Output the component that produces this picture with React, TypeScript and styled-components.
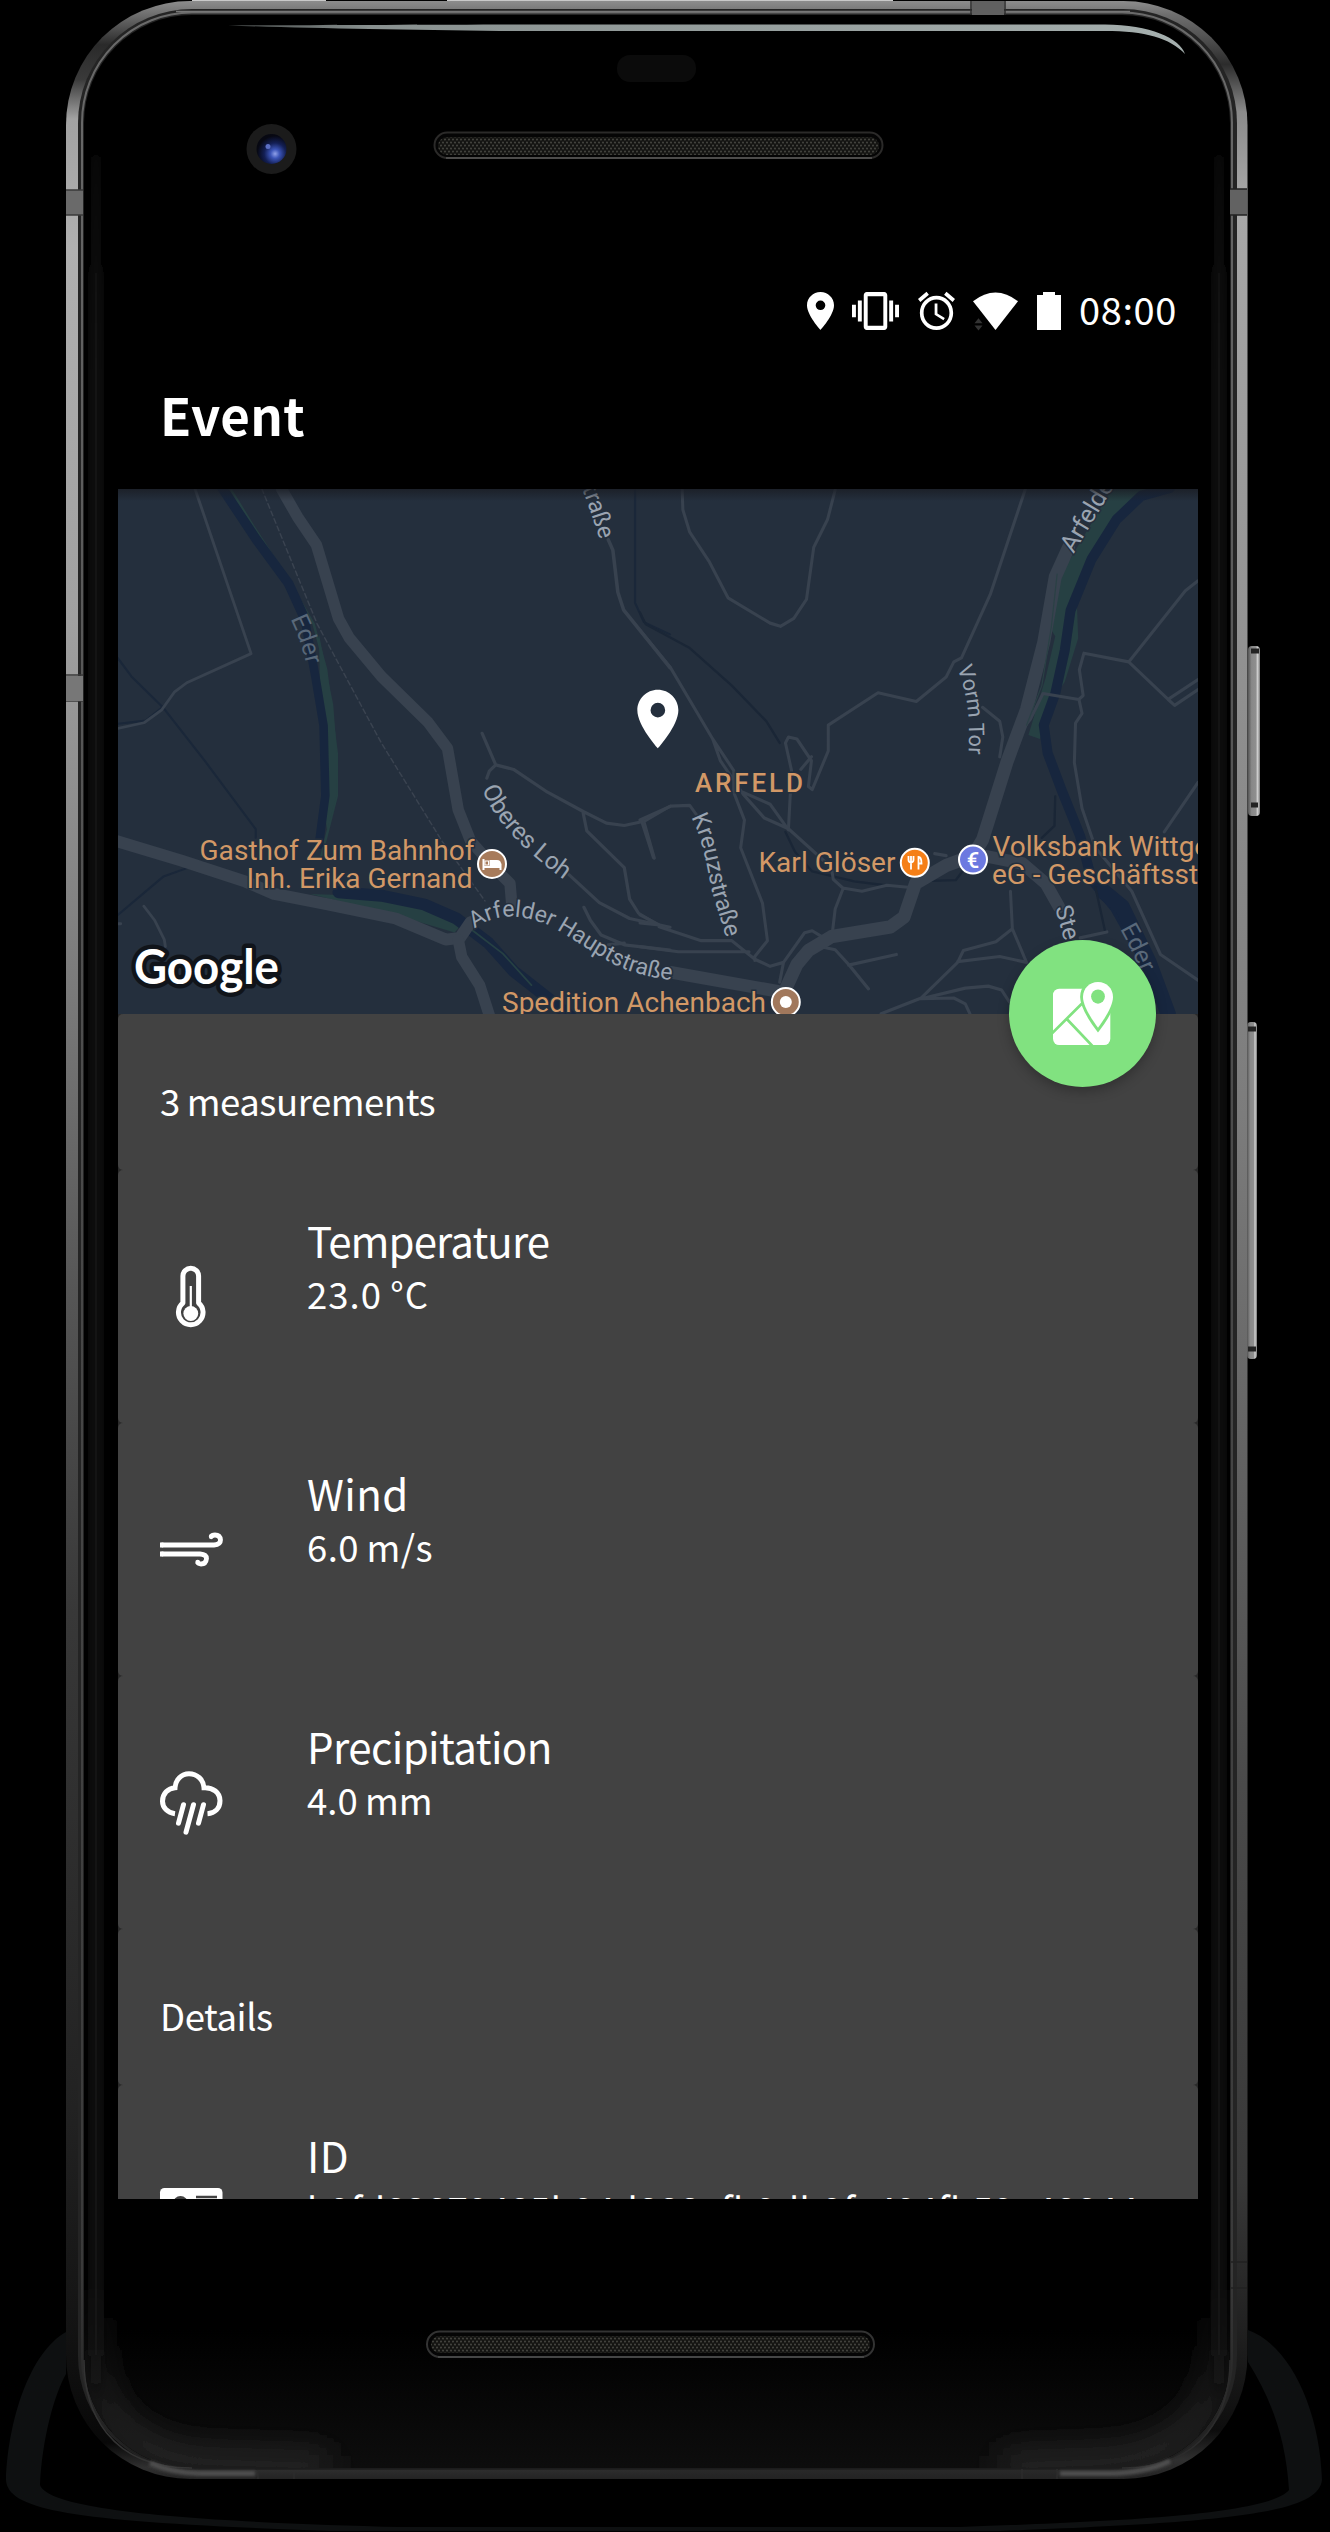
import React from "react";
import styled, { createGlobalStyle } from "styled-components";

const GlobalStyle = createGlobalStyle`
  body { margin: 0; background: #000; }
  * { box-sizing: border-box; }
`;

const sans = `"Noto Sans CJK SC", "Noto Sans", sans-serif`;

const Stage = styled.main`
  display: grid;
  width: 1330px;
  height: 2532px;
  background: #000;
  overflow: hidden;
  font-family: ${sans};
  color: #fff;
`;

const DeviceArt = styled.svg`
  grid-area: 1 / 1;
  width: 1330px;
  height: 2532px;
`;

const Screen = styled.section`
  grid-area: 1 / 1;
  display: flex;
  flex-direction: column;
  width: 1080px;
  height: 1920px;
  margin: 279px 0 0 118px;
  overflow: hidden;
`;

const StatusBar = styled.header`
  display: flex;
  flex: none;
  align-items: center;
  justify-content: flex-end;
  gap: 18.5px;
  height: 63px;
  padding-right: 21px;
`;

const StatusIcon = styled.svg<{ $w: number }>`
  display: block;
  width: ${(p) => p.$w}px;
  height: 38px;
  fill: #fff;
  overflow: visible;
`;

const Clock = styled.time`
  font-size: 38px;
  line-height: 60px;
  letter-spacing: 0.6px;
  padding-bottom: 3px;
`;

const AppBar = styled.div`
  display: flex;
  flex: none;
  align-items: center;
  height: 147px;
  padding: 0 0 3.5px 42px;
`;

const Title = styled.h1`
  margin: 0;
  font-size: 51px;
  line-height: 74px;
  font-weight: 700;
  letter-spacing: 0.3px;
`;

const MapArea = styled.div`
  position: relative;
  z-index: 1;
  flex: none;
  height: 525px;
`;

const MapDrawing = styled.svg`
  display: block;
  width: 1080px;
  height: 525px;
  font-family: Roboto, sans-serif;
`;

const Fab = styled.button`
  position: absolute;
  right: 42px;
  bottom: -73px;
  display: flex;
  align-items: center;
  justify-content: center;
  width: 147px;
  height: 147px;
  padding: 0;
  border: 0;
  border-radius: 50%;
  background: #81e280;
  box-shadow: 0 5px 12px rgba(0, 0, 0, 0.25);
`;

const List = styled.div`
  display: flex;
  flex: 1;
  flex-direction: column;
  min-height: 0;
  background: #2a2a2a;
`;

const Heading = styled.h2`
  flex: none;
  height: 156px;
  margin: 0;
  padding: 27px 42px 0;
  border-radius: 5px;
  background: #424242;
  font-size: 36.5px;
  line-height: 120px;
  font-weight: 400;
  letter-spacing: -0.45px;
`;

const Row = styled.article`
  display: flex;
  flex: none;
  height: 253px;
  padding-left: 42px;
  border-radius: 5px;
  background: #424242;
`;

const RowIcon = styled.svg`
  flex: none;
  align-self: center;
  width: 63px;
  height: 70px;
  margin-right: 84px;
  overflow: visible;
`;

const RowText = styled.div`
  display: flex;
  flex-direction: column;
  padding-top: 40.5px;
  white-space: nowrap;
`;

const Label = styled.div<{ $tracking: number }>`
  font-size: 42px;
  line-height: 58px;
  letter-spacing: ${(p) => p.$tracking}px;
`;

const Value = styled.div<{ $tracking: number }>`
  font-size: 36.5px;
  line-height: 50px;
  letter-spacing: ${(p) => p.$tracking}px;
`;

function Device() {
  return (
    <DeviceArt viewBox="0 0 1330 2532" aria-hidden="true">
      <defs>
        <linearGradient id="metalL" gradientUnits="userSpaceOnUse" x1="0" y1="0" x2="0" y2="2480">
          <stop offset="0" stopColor="#8f8f8f" />
          <stop offset=".006" stopColor="#6e6e6e" />
          <stop offset=".018" stopColor="#2a2a2a" />
          <stop offset=".032" stopColor="#3a3a3a" />
          <stop offset=".048" stopColor="#a2a2a2" />
          <stop offset=".1" stopColor="#b0b0b0" />
          <stop offset=".25" stopColor="#a0a0a0" />
          <stop offset=".4" stopColor="#7a7a7a" />
          <stop offset=".52" stopColor="#565656" />
          <stop offset=".65" stopColor="#383838" />
          <stop offset=".85" stopColor="#222" />
          <stop offset=".93" stopColor="#151515" />
          <stop offset=".985" stopColor="#080808" />
          <stop offset=".995" stopColor="#303030" />
          <stop offset="1" stopColor="#222" />
        </linearGradient>
        <linearGradient id="metalR" gradientUnits="userSpaceOnUse" x1="0" y1="0" x2="0" y2="2480">
          <stop offset="0" stopColor="#8f8f8f" />
          <stop offset=".006" stopColor="#6e6e6e" />
          <stop offset=".014" stopColor="#555" />
          <stop offset=".026" stopColor="#2c2c2c" />
          <stop offset=".045" stopColor="#8a8a8a" />
          <stop offset=".08" stopColor="#a8a8a8" />
          <stop offset=".25" stopColor="#939393" />
          <stop offset=".45" stopColor="#7c7c7c" />
          <stop offset=".6" stopColor="#606060" />
          <stop offset=".72" stopColor="#4a4a4a" />
          <stop offset=".88" stopColor="#383838" />
          <stop offset=".94" stopColor="#202020" />
          <stop offset=".98" stopColor="#0d0d0d" />
          <stop offset=".992" stopColor="#303030" />
          <stop offset="1" stopColor="#222" />
        </linearGradient>
        <linearGradient id="innerEdge" x1="0" x2="0" y1="0" y2="1">
          <stop offset="0" stopColor="#6a6a6a" />
          <stop offset=".5" stopColor="#484848" />
          <stop offset=".92" stopColor="#3a3a3a" />
          <stop offset="1" stopColor="#1c1c1c" />
        </linearGradient>
        <linearGradient id="foot" x1="0" x2="0" y1="0" y2="1">
          <stop offset="0" stopColor="#000" />
          <stop offset="1" stopColor="#0d0d0d" />
        </linearGradient>
        <linearGradient id="sideGlow" x1="0" x2="0" y1="0" y2="1">
          <stop offset="0" stopColor="#181818" stopOpacity="0" />
          <stop offset=".12" stopColor="#181818" />
          <stop offset=".97" stopColor="#181818" />
          <stop offset="1" stopColor="#181818" stopOpacity="0" />
        </linearGradient>
        <linearGradient id="cornerGlow" gradientUnits="userSpaceOnUse" x1="0" y1="2270" x2="0" y2="2440">
          <stop offset="0" stopColor="#262626" stopOpacity="0" />
          <stop offset="1" stopColor="#2a2a2a" />
        </linearGradient>
        <linearGradient id="shine" x1="0" x2="1" y1="0" y2="0">
          <stop offset="0" stopColor="#8a9291" stopOpacity=".5" />
          <stop offset=".15" stopColor="#899190" />
          <stop offset="1" stopColor="#a5afae" />
        </linearGradient>
        <linearGradient id="button" x1="0" x2="1" y1="0" y2="0">
          <stop offset="0" stopColor="#555" />
          <stop offset=".3" stopColor="#888" />
          <stop offset=".65" stopColor="#8f8f8f" />
          <stop offset=".8" stopColor="#d0d0d0" />
          <stop offset="1" stopColor="#777" />
        </linearGradient>
        <radialGradient id="lens" cx=".62" cy=".66" r=".6">
          <stop offset="0" stopColor="#8fa0e8" />
          <stop offset=".25" stopColor="#3c55b8" />
          <stop offset=".6" stopColor="#131f55" />
          <stop offset="1" stopColor="#070812" />
        </radialGradient>
        <filter id="soft" filterUnits="userSpaceOnUse" x="0" y="0" width="1330" height="2532">
          <feGaussianBlur stdDeviation="4" />
        </filter>
        <filter id="fine" filterUnits="userSpaceOnUse" x="0" y="2400" width="1330" height="132">
          <feGaussianBlur stdDeviation="1.500" />
        </filter>
        <filter id="wide" filterUnits="userSpaceOnUse" x="0" y="2000" width="1330" height="532">
          <feGaussianBlur stdDeviation="16" />
        </filter>
        <pattern id="mesh" width="4" height="6" patternUnits="userSpaceOnUse">
          <rect width="4" height="6" fill="#141412" />
          <circle cx="1" cy="1.500" r="1.100" fill="#41413c" />
          <circle cx="3" cy="4.500" r="1.100" fill="#41413c" />
        </pattern>
        <clipPath id="leftHalf"><rect x="0" y="0" width="660" height="2532" /></clipPath>
        <clipPath id="rightHalf"><rect x="660" y="0" width="670" height="2532" /></clipPath>
        <clipPath id="glass">
          <rect x="84" y="16" width="1146" height="2452" rx="108" />
        </clipPath>
      </defs>

      <path d="M66 2332 C30 2352 8 2420 6 2480 C8 2512 80 2522 330 2531 H1000 C1240 2522 1318 2512 1322 2480 C1320 2410 1290 2345 1248 2330 V2362 C1272 2400 1286 2440 1289 2490 C1268 2516 1100 2522 960 2527 H400 C250 2523 50 2515 40 2485 C42 2440 54 2395 66 2374 Z" fill="#0e1011" />

      <path d="M192 .5H326M447 .5H893" stroke="#c9c9c9" strokeWidth="1.500" />
      <rect x="66" y="1" width="1181" height="2478" rx="124" fill="url(#metalL)" clipPath="url(#leftHalf)" />
      <rect x="66" y="1" width="1181.500" height="2478" rx="124" fill="url(#metalR)" clipPath="url(#rightHalf)" />
      <rect x="78" y="9" width="1159" height="2461" rx="114" fill="#242424" />
      <rect x="82" y="12.500" width="1150" height="2456" rx="110" fill="none" stroke="url(#innerEdge)" strokeWidth="2" />
      <path d="M176 11.500H1130" stroke="#777" strokeWidth="1.500" />
      <rect x="84" y="15" width="1146" height="2453" rx="108" fill="#000" />
      <rect x="66" y="190" width="17" height="25" fill="#6a6a6a" />
      <path d="M66 190H83M66 215H83M66 675H83M66 701H83" stroke="#3a3a3a" strokeWidth="1.500" />
      <rect x="66" y="676" width="17" height="25" fill="#777" />
      <rect x="1230" y="189" width="17" height="26" fill="#626262" />
      <path d="M1230 189H1247M1230 215H1247M1231 2262H1247M1231 2288H1247" stroke="#222" strokeWidth="1.500" />
      <rect x="972" y="1" width="32" height="14" fill="#606060" />
      <path d="M971 1V15M1005 1V15M258 2470V2479M294 2470V2479M1022 2469V2479M1057 2469V2479" stroke="#2c2c2c" strokeWidth="1.500" />

      <g clipPath="url(#glass)">
        <rect x="84" y="2330" width="1146" height="138" fill="url(#foot)" />
        <path d="M94 2250 V2350 Q98 2452 200 2462 L330 2466" fill="none" stroke="url(#cornerGlow)" strokeWidth="26" filter="url(#wide)" />
        <path d="M1220 2250 V2350 Q1214 2452 1110 2462 L1000 2466" fill="none" stroke="url(#cornerGlow)" strokeWidth="26" filter="url(#wide)" />
        <rect x="91" y="90" width="10" height="2310" fill="url(#sideGlow)" filter="url(#soft)" />
        <rect x="1214" y="90" width="10" height="2310" fill="url(#sideGlow)" filter="url(#soft)" />
      </g>
      <path d="M84 2360 C84 2410 108 2468 192 2468" fill="none" stroke="#333" strokeWidth="1.500" />
      <path d="M1230 2360 C1230 2410 1206 2468 1122 2468" fill="none" stroke="#2c2c2c" strokeWidth="1.500" />
      <path d="M150 2463 Q172 2473 200 2473.500 H255M1060 2473.500 H1110 Q1145 2473 1170 2461" fill="none" stroke="#505050" strokeWidth="5" filter="url(#fine)" />

      <path d="M228 25.500 C300 25 400 25 500 24.500 H1105 C1150 25 1180 38 1185 54 C1170 38 1145 31 1105 31 H500 C400 30 300 28 228 25.500Z" fill="url(#shine)" />

      <rect x="617" y="55" width="79" height="27" rx="13" fill="#0b0b0b" />
      <circle cx="271.500" cy="149" r="25" fill="#1b1b1b" />
      <circle cx="271.500" cy="149" r="15" fill="url(#lens)" />
      <circle cx="268" cy="146.500" r="2.500" fill="#5c6fc4" />

      <rect x="434.500" y="132.500" width="448" height="25.500" rx="12.750" fill="#050505" stroke="#2b2a29" strokeWidth="2" />
      <rect x="438" y="137" width="441" height="18" rx="9" fill="url(#mesh)" />
      <path d="M446 158H872" stroke="#5a5957" strokeWidth="1.500" />
      <rect x="427" y="2331.500" width="447" height="25.500" rx="12.750" fill="#050505" stroke="#333" strokeWidth="2" />
      <rect x="431" y="2336" width="439" height="17" rx="8.500" fill="url(#mesh)" />
      <path d="M438 2357H864" stroke="#4c4e4e" strokeWidth="1.500" />

      <rect x="1248" y="646" width="12" height="170" rx="4" fill="url(#button)" />
      <path d="M1251 651H1259M1251 805H1258" stroke="#222" strokeWidth="5" />
      <rect x="1247" y="1022" width="10" height="337" rx="4" fill="url(#button)" />
      <path d="M1248 1029H1256M1248 1349H1256" stroke="#222" strokeWidth="5" />
    </DeviceArt>
  );
}

function StatusIcons() {
  return (
    <>
      <StatusIcon $w={27} viewBox="5 2 14 20" preserveAspectRatio="none">
        <path d="M12 2C8.13 2 5 5.13 5 9c0 5.25 7 13 7 13s7-7.75 7-13c0-3.87-3.13-7-7-7zm0 9.5a2.5 2.5 0 1 1 0-5 2.5 2.5 0 0 1 0 5z" />
      </StatusIcon>
      <StatusIcon $w={47} viewBox="0 3 24 18" preserveAspectRatio="none">
        <path d="M0 15h2V9H0v6zm3 2h2V7H3v10zm19-8v6h2V9h-2zm-3 8h2V7h-2v10zM16.500 3h-9C6.670 3 6 3.670 6 4.500v15c0 .83.67 1.500 1.500 1.500h9c.83 0 1.500-.67 1.500-1.500v-15c0-.83-.67-1.500-1.500-1.500zM16 19H8V5h8v14z" />
      </StatusIcon>
      <StatusIcon $w={37} viewBox="2 2 20 20" preserveAspectRatio="none">
        <path d="M22 5.720l-4.600-3.860-1.290 1.530 4.600 3.860L22 5.720zM7.880 3.390L6.600 1.860 2 5.710l1.290 1.530 4.590-3.850zM12.500 8H11v6l4.750 2.850.75-1.230-4-2.370V8zM12 4c-4.970 0-9 4.030-9 9s4.020 9 9 9a9 9 0 0 0 0-18zm0 16c-3.870 0-7-3.130-7-7s3.130-7 7-7 7 3.130 7 7-3.130 7-7 7z" />
      </StatusIcon>
      <StatusIcon $w={45} viewBox="0 0 45 37" preserveAspectRatio="none">
        <path d="M0 9Q22.500-8 45 9L22.500 37Z" />
        <path d="M1.500 30.500h8l-4-5zM1.500 32.500h8l-4 5z" fill="#333" />
      </StatusIcon>
      <StatusIcon $w={24} viewBox="0 0 24 38" preserveAspectRatio="none">
        <path d="M6 0H18V3H24V38H0V3H6Z" />
      </StatusIcon>
    </>
  );
}

const ROAD = "#38424f";
const WATER = "#17263e";
const PARK = "#264043";
const POI = "#d29866";
const STREET = "#9aa4b1";

function TownMap() {
  return (
    <MapDrawing viewBox="118 489 1080 525">
      <defs>
        <linearGradient id="mapShade" x1="0" x2="0" y1="0" y2="1">
          <stop offset="0" stopColor="#1a1d24" stopOpacity=".8" />
          <stop offset="1" stopColor="#1a1d24" stopOpacity="0" />
        </linearGradient>
        <path id="pStrTop" d="M560 440 L584 494 Q592 515 600 540" />
        <path id="pArf" d="M1073.500 554 L1113 488 L1151 425" />
        <path id="pEderL" d="M290.500 619 Q301 640 307 668" />
        <path id="pEderR" d="M1120 929 Q1132 950 1144 980" />
        <path id="pOberes" d="M482 789 C492 815 515 845 566 881" />
        <path id="pHaupt" d="M474.500 929 C497 912 520 914 548 925 C575 938 610 968 640 974 C655 978 665 980 685 981" />
        <path id="pKreuz" d="M691 817 C706 845 708 880 714 898 C719 915 724 930 730 950" />
        <path id="pVorm" d="M957 668 C967 693 971 715 968 765" />
        <path id="pSte" d="M1055 908 Q1060 925 1068 955" />
      </defs>
      <rect x="118" y="489" width="1080" height="525" fill="#242f3d" />

      <g transform="translate(110 480) scale(.35714 .3508)" fill="none" strokeLinejoin="round" strokeLinecap="round">
        <path d="M340 30 L400 130 L470 240 L530 340 L570 410 L605 540 L635 780 L635 900 L610 1000 L590 1080" stroke={PARK} strokeWidth="7" />
        <path d="M585 440 L625 640 L637 800 L634 900 L608 1000 L595 900 L590 700 Z" fill={PARK} />
        <path d="M560 1180 L850 1190 L960 1230 L990 1260 L965 1290 L800 1240 Z" fill={PARK} />
        <path d="M312 20 L410 170 L500 295 L545 395" stroke={WATER} strokeWidth="27" />
        <path d="M545 395 L575 560 L598 700 L603 900 L590 1000 L585 1040" stroke={WATER} strokeWidth="24" />
        <path d="M640 1175 L760 1185 L880 1210 L970 1250 L1060 1320 L1130 1400 L1230 1480 L1290 1530" stroke={WATER} strokeWidth="34" />
        <path d="M1010 1280 L1100 1350 L1180 1440" stroke={PARK} strokeWidth="5" />
        <path d="M22 508 L60 560 L150 650 L265 800 L408 995 V1020 M22 695 L100 686 L150 645 M22 1240 L150 1130 L260 1090 M1470 30 V350 L1495 405 L1568 440" stroke="#1a2739" strokeWidth="6" />
        <path d="M238 25 L395 495 L215 578 L180 605 L145 655 L95 692 L22 708" stroke={ROAD} strokeWidth="8" />
        <path d="M22 1265H30M95 1215 L125 1255 L152 1310 L155 1330" stroke={ROAD} strokeWidth="8" />
        <path d="M425 25 L580 410 L760 750 L930 1030 L1050 1200" stroke="#3a4350" strokeWidth="4" strokeDasharray="14 9" />
        <path d="M480 25 L525 105 L578 185 L640 395 L670 450 L760 560 L890 690 L945 765 L975 940 L1010 1030 L1090 1120 L1120 1150 L1125 1210" stroke={ROAD} strokeWidth="32" />
        <path d="M15 1028 L200 1085 L380 1145 L460 1180 L610 1210 L800 1250 L940 1310 L980 1305 L1010 1260" stroke={ROAD} strokeWidth="34" />
        <path d="M975 1310 L985 1360 L1035 1440 L1065 1535" stroke={ROAD} strokeWidth="32" />
        <path d="M1395 170 L1408 200 L1422 320 L1438 370 L1568 535" stroke={ROAD} strokeWidth="10" />
        <path d="M1042 722 L1080 812 L1062 830 L1055 850 M1080 812 L1130 825 L1225 890 L1325 945 L1390 978 L1440 985 L1495 973 L1568 930 M1325 950 L1335 1000 L1440 1105 L1455 1195 L1480 1235 L1530 1265 M1495 975 L1524 1078 M1285 1125 L1370 1205 L1455 1250 L1568 1275 M1327 1218 L1345 1255 L1375 1297 L1440 1325 L1568 1340 M1395 1325 L1440 1320" stroke={ROAD} strokeWidth="9" />
      </g>

      <g transform="translate(640 480) scale(.3827 .3954)" fill="none" strokeLinejoin="round" strokeLinecap="round">
        <path d="M1235 20 H1345 L1250 80 L1180 180 L1140 270 L1145 400 L1110 510 L1070 570 L1045 655 L1015 645 L1060 500 L1085 395 L1072 375 L1095 250 L1130 190 Z" fill={PARK} />
        <path d="M1385 20 L1310 40 L1245 100 L1180 200 L1125 330 L1110 430 L1085 540 L1055 620 L1065 690 L1100 780 L1150 900 L1180 1010 L1240 1080 L1310 1200 L1385 1355" stroke={WATER} strokeWidth="26" />
        <path d="M1210 1040 L1260 1080 L1330 1220 L1380 1350" stroke={WATER} strokeWidth="40" />
        <path d="M0 335 L15 365 L130 425 L240 520 L330 610 L365 665 M380 890 L405 940 L450 990 L560 1015 L640 1025 M720 1015 L825 1012 L850 980 M1085 800 L1083 875 L1050 905 M1190 1030 L1215 1140" stroke="#1a2636" strokeWidth="6" />
        <path d="M110 20 L112 75 L130 132 L180 205 L230 298 L340 362 L367 370 L402 350 L435 302 L454 170 L490 100 L510 25 M1008 20 L915 290 L840 450 L820 460 L800 498 L722 560 L622 538 L492 620 V685 L450 783 L440 775 L448 710 L410 655 L388 650 L380 665 L396 735 L388 880 M448 700 L420 732" stroke={ROAD} strokeWidth="8" />
        <path d="M0 380 L80 475 L190 655 L245 735 L245 790 L273 860 L263 930 L320 1070 L333 1165 L300 1205 L300 1215 M190 655 L210 710 L270 795 L325 855 L388 882 L500 980 L505 1010 L530 1032 L580 1040 L645 1025 L700 1030 M270 790 L340 820 L388 885 M0 860 L80 825 L130 823 L150 850 M5 865 L35 955 M0 1120 L50 1125 L0 1100 M50 1130 L160 1165 H240 L300 1212 L340 1230 L375 1220 L430 1145 L450 1140 L475 1155 M0 1180 L100 1193 H285 M530 1035 L510 1085 L502 1150 M365 1270 L375 1220 M470 1180 L510 1188 L545 1225 L597 1287 M545 1227 L670 1200 M630 1350 L735 1310 L830 1220 L845 1190 L930 1168 L973 1135 L968 1040 M973 1135 L1010 1220 L940 1205 L830 1218 M735 1312 L850 1285 L910 1280 L945 1290 L965 1320 M735 1312 L820 1310 L850 1325 L862 1350" stroke={ROAD} strokeWidth="8" />
        <path d="M895 575 L940 610 L948 650 L940 700 M1458 255 L1425 280 L1277 460 L1160 438 L1148 480 L1158 545 L1147 555 L1053 540 L1020 605 L1000 630 M1277 460 L1380 555 L1458 505 M1380 555 L1397 570 L1458 530 M1147 555 L1155 590 L1138 615 L1135 715 L1155 830 L1190 930 L1285 1040 L1360 1200 L1458 1265 M1458 765 L1370 890 M1150 1158 L1220 1143 M770 945 L800 950" stroke={ROAD} strokeWidth="8" />
        <path d="M1120 170 L1085 245 L1055 410 L1010 580 L960 710 L895 910 L870 950 L800 975 L720 1020 L690 1105 L655 1130 L500 1155 L440 1190 L410 1225 L370 1310" stroke={ROAD} strokeWidth="34" />
        <path d="M80 1245 L360 1293 M870 945 L1000 970 L1060 1020 L1095 1080" stroke={ROAD} strokeWidth="32" />
        <path d="M1090 238 L1075 370 L1050 520 L1010 620" stroke="#2a4145" strokeWidth="3" />
      </g>

      <g fontSize="23.500" fill={STREET} stroke="#242f3d" strokeWidth="3" paintOrder="stroke">
        <text><textPath href="#pStrTop" startOffset="100%" textAnchor="end">straße</textPath></text>
        <text fontSize="25"><textPath href="#pArf">Arfelder</textPath></text>
        <text fontSize="24.500"><textPath href="#pOberes">Oberes Loh</textPath></text>
        <text fontSize="23"><textPath href="#pHaupt">Arfelder Hauptstraße</textPath></text>
        <text><textPath href="#pKreuz">Kreuzstraße</textPath></text>
        <text fontSize="21.500"><textPath href="#pVorm">Vorm Tor</textPath></text>
        <text fontSize="24"><textPath href="#pSte">Ste</textPath></text>
      </g>
      <g fontSize="24.500" fill="#596879">
        <text><textPath href="#pEderL">Eder</textPath></text>
        <text><textPath href="#pEderR">Eder</textPath></text>
      </g>

      <g fontSize="28" fill={POI} stroke="#242f3d" strokeWidth="3" paintOrder="stroke">
        <text x="199.500" y="859.500" textLength="275">Gasthof Zum Bahnhof</text>
        <text x="246.500" y="887.500" textLength="226">Inh. Erika Gernand</text>
        <text x="758.500" y="872" textLength="137">Karl Glöser</text>
        <text x="992.500" y="855.500">Volksbank Wittgenstein</text>
        <text x="992" y="883.500">eG - Geschäftsstelle</text>
        <text x="502" y="1012" textLength="264">Spedition Achenbach</text>
        <text x="695" y="792" fontSize="26" fontWeight="500" textLength="108">ARFELD</text>
      </g>

      <g stroke="#fff" strokeWidth="2">
        <circle cx="492" cy="864" r="14" fill="#a77b5b" />
        <circle cx="914.800" cy="862.800" r="14" fill="#f57f17" />
        <circle cx="973" cy="859.600" r="14" fill="#6c79e0" />
        <circle cx="785.800" cy="1002" r="14" fill="#a1785c" />
      </g>
      <circle cx="785.800" cy="1002" r="6" fill="#fff" />
      <path d="M483.500 859V870M500.500 870V863.500M483.500 867H500.500" stroke="#fff" strokeWidth="2" />
      <path d="M489.500 860H497Q501 860 501 864V866H489.500Z" fill="#fff" />
      <rect x="485" y="861" width="3.500" height="4" fill="none" stroke="#fff" />
      <path d="M908.500 856V860Q908.500 862 911 862.500Q913.500 862 913.500 860V856M911 856V869.500M918.500 869.500V857Q921.500 857 921.500 863.500H918.500" fill="none" stroke="#fff" strokeWidth="1.800" />
      <text x="973" y="867.500" fontSize="22" fontWeight="500" textAnchor="middle" fill="#fff">€</text>

      <path transform="translate(622.700 683.800) scale(2.930)" fill="#fff" d="M12 2C8.130 2 5 5.130 5 9c0 5.250 7 13 7 13s7-7.750 7-13c0-3.870-3.130-7-7-7zm0 9.500a2.500 2.500 0 1 1 0-5 2.500 2.500 0 0 1 0 5z" />

      <text x="134" y="983.500" fontFamily="Lato, sans-serif" fontWeight="700" fontSize="48" textLength="145" lengthAdjust="spacingAndGlyphs" fill="#fff" stroke="#10141a" strokeWidth="9" strokeLinejoin="round" paintOrder="stroke">Google</text>
      <rect x="118" y="489" width="1080" height="12" fill="url(#mapShade)" />
    </MapDrawing>
  );
}

function FabIcon() {
  return (
    <svg width="60" height="63" viewBox="0 0 156 160" preserveAspectRatio="none">
      <rect x="0" y="17" width="149" height="143" rx="16" fill="#fff" />
      <path d="M-4 132 L82 48 M34 92 L104 164" stroke="#81e280" strokeWidth="7" fill="none" />
      <path d="M117 0C94 0 78 17 78 38C78 67 117 116 117 116S156 67 156 38C156 17 140 0 117 0Z" fill="none" stroke="#81e280" strokeWidth="15" />
      <path d="M117 0C94 0 78 17 78 38C78 67 117 116 117 116S156 67 156 38C156 17 140 0 117 0Z" fill="#fff" />
      <circle cx="117" cy="37" r="18" fill="#81e280" />
    </svg>
  );
}

function ThermometerIcon() {
  return (
    <RowIcon viewBox="0 -3 63 70">
      <path d="M22.900 38V11A7.850 7.850 0 0 1 38.600 11V38A12.300 12.300 0 1 1 22.900 38Z" fill="none" stroke="#fff" strokeWidth="5" strokeLinejoin="round" />
      <path d="M30.800 21V48" stroke="#fff" strokeWidth="2.200" />
      <circle cx="30.800" cy="48.500" r="7.400" fill="#fff" />
    </RowIcon>
  );
}

function WindIcon() {
  return (
    <RowIcon viewBox="0 0.500 63 70" fill="none" stroke="#fff" strokeWidth="4.800">
      <path d="M0 30.500H54Q60.500 30 60.500 25.500Q60 20.500 55 20.500Q52 20.500 51 22.500" />
      <path d="M0 39.500H40Q46.500 40 46.500 44Q46 49.500 41 49.500Q38.500 49.500 37.500 47.500" />
      <path d="M51.200 22.200V22.300M37.700 47.700V47.800M2.400 30.500V30.600M2.400 39.500V39.600" strokeLinecap="round" />
    </RowIcon>
  );
}

function RainIcon() {
  return (
    <RowIcon viewBox="0 0.800 63 70" fill="none" stroke="#fff" strokeWidth="5">
      <path d="M15 46.500C7.500 45.500 2.500 40.500 2.500 34C2.500 26.500 8 21 15 20.500C15.500 12.500 21.500 6.500 29 6.500C37 6.500 43.500 12.500 44 20.500C53 20 60 25.500 60 33.500C60 41 55 46 47.500 46.500" />
      <path d="M23.500 37.500L18.500 56M33.500 37.500L26 65M43.500 37.500L38.500 56" strokeLinecap="round" />
    </RowIcon>
  );
}

function CardIcon() {
  return (
    <RowIcon viewBox="0 0 63 70">
      <rect x="0" y="11" width="62.500" height="48" rx="4.500" fill="#fff" />
      <path d="M36 20H57M36 28H57M36 36H57" stroke="#424242" strokeWidth="2.500" />
      <circle cx="20.500" cy="26.500" r="7.500" fill="#424242" />
      <path d="M8 48Q8 37 20.500 37T33 48Z" fill="#424242" />
    </RowIcon>
  );
}

type Entry = {
  label: string;
  value: string;
  labelTracking: number;
  valueTracking: number;
  Icon: () => React.ReactElement;
};

const thin = "\u2009";

const measurements: Entry[] = [
  { label: "Temperature", value: `23.0${thin}°C`, labelTracking: -0.9, valueTracking: 1, Icon: ThermometerIcon },
  { label: "Wind", value: `6.0${thin}m/s`, labelTracking: 0.4, valueTracking: 0.4, Icon: WindIcon },
  { label: "Precipitation", value: `4.0${thin}mm`, labelTracking: -0.6, valueTracking: 0, Icon: RainIcon },
];

const details: Entry[] = [
  {
    label: "ID",
    value: "b9fd82879485b94d888efb9db9fe494fb59a48844",
    labelTracking: 0.4,
    valueTracking: 0.4,
    Icon: CardIcon,
  },
];

function Entries({ items }: { items: Entry[] }) {
  return (
    <>
      {items.map(({ label, value, labelTracking, valueTracking, Icon }) => (
        <Row key={label}>
          <Icon />
          <RowText>
            <Label $tracking={labelTracking}>{label}</Label>
            <Value $tracking={valueTracking}>{value}</Value>
          </RowText>
        </Row>
      ))}
    </>
  );
}

export default function App() {
  return (
    <Stage>
      <GlobalStyle />
      <Device />
      <Screen>
        <StatusBar>
          <StatusIcons />
          <Clock>08:00</Clock>
        </StatusBar>
        <AppBar>
          <Title>Event</Title>
        </AppBar>
        <MapArea>
          <TownMap />
          <Fab aria-label="Open map">
            <FabIcon />
          </Fab>
        </MapArea>
        <List>
          <Heading>3{thin}measurements</Heading>
          <Entries items={measurements} />
          <Heading>Details</Heading>
          <Entries items={details} />
        </List>
      </Screen>
    </Stage>
  );
}
